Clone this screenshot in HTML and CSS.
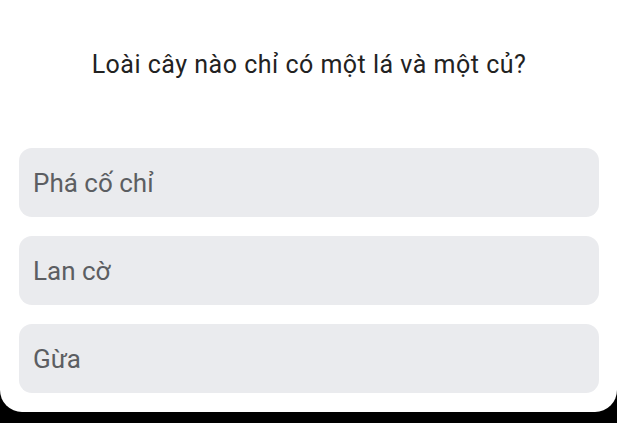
FILE: index.html
```html
<!DOCTYPE html>
<html lang="vi">
<head>
<meta charset="utf-8">
<title>Quiz</title>
<link rel="stylesheet" href="styles.css">
</head>
<body>
<div class="card">
  <h1 class="question">Loài cây nào chỉ có một lá và một củ?</h1>
  <div class="options">
    <div class="option">Phá cố chỉ</div>
    <div class="option">Lan cờ</div>
    <div class="option">Gừa</div>
  </div>
</div>
</body>
</html>
```
FILE: styles.css
```css
html, body {
  margin: 0;
  padding: 0;
  background: #000;
}
body {
  width: 617px;
  height: 423px;
  overflow: hidden;
  font-family: Roboto, "Noto Sans", sans-serif;
}
.card {
  background: #fff;
  height: 412px;
  border-radius: 0 0 22px 22px;
  box-sizing: border-box;
  padding: 0 18px 0 19px;
  display: flex;
  flex-direction: column;
}
.question {
  margin: 0;
  height: 148px;
  box-sizing: border-box;
  padding-top: 48px;
  font-size: 25px;
  font-weight: 400;
  letter-spacing: 0.5px;
  line-height: 34px;
  color: #222;
  text-align: center;
}
.options {
  display: flex;
  flex-direction: column;
  gap: 19px;
}
.option {
  height: 69px;
  background: #eaebee;
  border-radius: 13px;
  display: flex;
  align-items: center;
  padding-left: 14px;
  font-size: 26px;
  color: #5c5e62;
}
```
